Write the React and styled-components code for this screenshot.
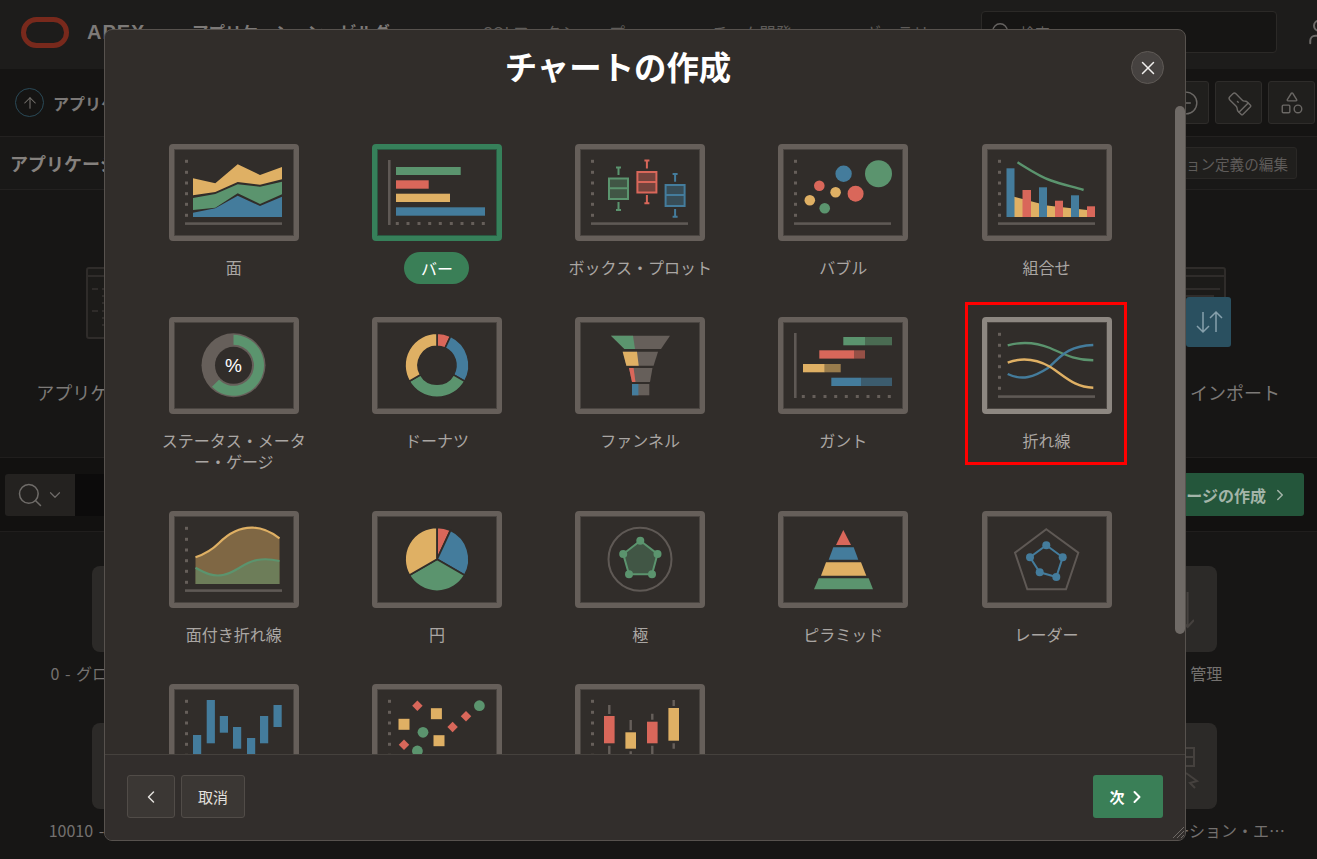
import React from "react";
import styled, { createGlobalStyle } from "styled-components";
import {
  ArrowUp,
  ChevronDown,
  ChevronLeft,
  ChevronRight,
  CircleMinus,
  Flashlight,
  Search,
  Shapes,
  User,
  X,
} from "lucide-react";

const BG = "#312d2a";
const GREY = "#665f5a";
const AXIS = "#5f5955";
const YEL = "#dfb064";
const BLU = "#447c9c";
const GRN = "#5b946e";
const RED = "#d9675a";
const FONT = `"Noto Sans CJK JP", "Noto Sans", sans-serif`;

const GlobalStyle = createGlobalStyle`
  html, body {
    margin: 0;
    height: 100%;
    background: #151413;
    font-family: ${FONT};
    overflow: hidden;
  }
`;

const Page = styled.div`
  position: relative;
  width: 1317px;
  height: 859px;
  overflow: hidden;
  background: #171615;
`;

const TopBar = styled.header`
  height: 69px;
  box-sizing: border-box;
  display: flex;
  align-items: center;
  padding: 0 0 5px 21px;
  background: #1d1c1b;
  color: #7d7a78;

  > svg {
    flex: none;
  }
`;

const Brand = styled.span`
  flex: none;
  margin-left: 18px;
  width: 105px;
  font: 700 20px "Liberation Sans", sans-serif;
  letter-spacing: 1px;
`;

const NavStrong = styled.span`
  flex: none;
  width: 291px;
  font-size: 16.5px;
  font-weight: 700;
  white-space: nowrap;
`;

const NavItem = styled.span`
  width: ${(p) => p.$w}px;
  flex: none;
  font-size: 16px;
  color: #5f5c5a;
  white-space: nowrap;
`;

const TopSearch = styled.div`
  width: 296px;
  height: 42px;
  box-sizing: border-box;
  flex: none;
  margin-left: 47px;
  display: flex;
  align-items: center;
  gap: 8px;
  padding-left: 8px;
  background: #161514;
  border: 1px solid #2b2927;
  border-radius: 4px;
  color: #666361;
  font-size: 15px;
`;

const UserSlot = styled.div`
  margin-left: 27px;
  flex: none;
  color: #6e6b69;
  display: flex;
`;

const Toolbar = styled.div`
  height: 67px;
  box-sizing: border-box;
  display: flex;
  align-items: center;
  padding: 0 2px 0 15px;
  background: #151413;
`;

const UpCircle = styled.div`
  width: 29px;
  height: 29px;
  box-sizing: border-box;
  border: 1px solid #2a4a58;
  border-radius: 50%;
  display: flex;
  align-items: center;
  justify-content: center;
  color: #77736f;
`;

const Crumb = styled.span`
  margin-left: 9px;
  font-size: 16px;
  font-weight: 700;
  color: #7b7876;
  white-space: nowrap;
`;

const ToolButtons = styled.div`
  margin-left: auto;
  display: flex;
  gap: 6px;
`;

const ToolButton = styled.div`
  width: 47px;
  height: 43px;
  box-sizing: border-box;
  display: flex;
  align-items: center;
  justify-content: center;
  background: #201f1d;
  border: 1px solid #2e2c2a;
  border-radius: 3px;
  color: #6b6865;
`;

const SectionHead = styled.div`
  height: 54px;
  box-sizing: border-box;
  display: flex;
  align-items: center;
  justify-content: space-between;
  padding: 0 20px 0 10px;
  background: #191817;
  border-top: 1px solid #232120;
  border-bottom: 1px solid #232120;
`;

const SectionTitle = styled.h2`
  margin: 0;
  font-size: 18px;
  font-weight: 700;
  color: #85817e;
`;

const EditButton = styled.div`
  height: 32px;
  box-sizing: border-box;
  padding: 0 8px;
  display: flex;
  align-items: center;
  font-size: 14.6px;
  color: #5f5c5a;
  background: #201f1d;
  border: 1px solid #2a2826;
  border-radius: 3px;
`;

const Hero = styled.section`
  height: 267px;
  box-sizing: border-box;
  display: flex;
  justify-content: space-between;
  padding: 77px 27px 0 26px;
  background: #171615;
`;

const HeroItem = styled.div`
  width: 200px;
  display: flex;
  flex-direction: column;
  align-items: center;
  font-size: 18px;
  color: #7d7a78;
  white-space: nowrap;
`;

const HeroIcon = styled.div`
  position: relative;
  height: 72px;
  margin-bottom: 40px;
  margin-right: ${(p) => p.$nudge || 0}px;
  color: #2f2c2a;
`;

const ImportBadge = styled.div`
  position: absolute;
  right: -5px;
  bottom: -8px;
  width: 45px;
  height: 50px;
  display: flex;
  align-items: center;
  justify-content: center;
  background: #2a5060;
  border-radius: 3px;
  color: #86a0ac;
`;

const SearchBar = styled.div`
  height: 75px;
  box-sizing: border-box;
  display: flex;
  align-items: center;
  padding: 0 13px 0 5px;
  background: #121110;
  border-top: 1px solid #201e1d;
  border-bottom: 1px solid #201e1d;
`;

const SearchToggle = styled.div`
  width: 70px;
  height: 42px;
  display: flex;
  align-items: center;
  justify-content: center;
  gap: 2px;
  background: #242220;
  border-radius: 3px 0 0 3px;
  color: #6f6c69;
`;

const SearchInput = styled.div`
  flex: 1;
  height: 42px;
  background: #0c0b0b;
`;

const CreateButton = styled.div`
  height: 43px;
  margin-left: 12px;
  padding: 0 15px 0 12px;
  display: flex;
  align-items: center;
  gap: 5px;
  background: #24563b;
  border-radius: 3px;
  font-size: 16px;
  font-weight: 700;
  color: #a3b5a9;
`;

const PageGrid = styled.div`
  display: grid;
  grid-template-columns: repeat(5, 234px);
  column-gap: 25.8px;
  padding: 34px 0 0 18px;
`;

const PageCard = styled.div`
  height: 157px;
  display: flex;
  flex-direction: column;
  align-items: center;
  min-width: 0;
`;

const PageTile = styled.div`
  width: 86px;
  height: 86px;
  flex: none;
  display: flex;
  align-items: center;
  justify-content: center;
  background: #2c2a28;
  border-radius: 8px;
  color: #45413e;
`;

const PageLabel = styled.div`
  margin-top: 10px;
  max-width: 234px;
  font-size: 16px;
  line-height: 22px;
  word-spacing: 2px;
  color: #74716f;
  white-space: nowrap;
  overflow: hidden;
  text-overflow: ellipsis;
  text-align: center;
`;

const Modal = styled.div`
  position: absolute;
  left: 104px;
  top: 29px;
  width: 1082px;
  height: 812px;
  box-sizing: border-box;
  display: flex;
  flex-direction: column;
  background: ${BG};
  border: 1px solid #57524e;
  border-radius: 8px;
  overflow: hidden;
`;

const ModalHead = styled.div`
  height: 76px;
  flex: none;
  display: flex;
  align-items: flex-start;
  padding-right: 21px;
`;

const ModalTitle = styled.h1`
  flex: 1;
  margin: 14px 0 0;
  font-size: 32.4px;
  line-height: 44px;
  font-weight: 700;
  text-align: center;
  color: #fff;
`;

const CloseButton = styled.button`
  width: 33px;
  height: 33px;
  margin-top: 21px;
  padding: 0;
  display: flex;
  align-items: center;
  justify-content: center;
  background: #464240;
  border: 1px solid #5f5a56;
  border-radius: 50%;
  color: #f0eeec;
`;

const ModalBody = styled.div`
  flex: 1;
  min-height: 0;
  overflow: hidden;
  padding: 38px 27px 44px 27.2px;
`;

const ScrollThumb = styled.div`
  position: absolute;
  right: 0;
  top: 76px;
  width: 10px;
  height: 528px;
  border-radius: 5px;
  background: #6f6a66;
`;

const ChartGrid = styled.div`
  display: grid;
  grid-template-columns: repeat(5, 203.2px);
`;

const Tile = styled.div`
  position: relative;
  display: flex;
  flex-direction: column;
  align-items: center;
  padding-bottom: 34px;
`;

const ChartFrame = styled.div`
  width: 130px;
  height: 97px;
  box-sizing: border-box;
  flex: none;
  border: 5px solid ${(p) => (p.$selected ? "#36805a" : p.$focused ? "#8d8781" : GREY)};
  border-radius: 4px;
  box-shadow: inset 0 0 0 1px ${(p) => (p.$selected ? "#2a5a42" : "#4a4541")};

  svg {
    display: block;
    width: 120px;
    height: 87px;
  }
`;

const TileLabel = styled.div`
  width: 155px;
  margin-top: 10px;
  font-size: 16px;
  line-height: 21px;
  padding: 5.5px 0;
  text-align: center;
  color: #aaa6a3;
`;

const SelectedLabel = styled.div`
  margin: 11px 0 -1px;
  padding: 5.5px 16.5px;
  font-size: 16px;
  line-height: 21px;
  border-radius: 16px;
  background: #3a7f57;
  color: #fff;
`;

const Highlight = styled.div`
  position: absolute;
  left: 20px;
  top: -15px;
  width: 162px;
  height: 163px;
  box-sizing: border-box;
  border: 3px solid #f00;
  pointer-events: none;
`;

const ModalFoot = styled.div`
  height: 86px;
  flex: none;
  box-sizing: border-box;
  display: flex;
  align-items: flex-start;
  gap: 6px;
  padding: 20px 22px 0 22px;
  border-top: 1px solid #45413d;
  background: #322e2c;
`;

const FootButton = styled.button`
  height: 43px;
  padding: 0 ${(p) => (p.$icon ? "13px" : "16px")};
  display: flex;
  align-items: center;
  background: #3b3734;
  border: 1px solid #514c48;
  border-radius: 3px;
  font-family: ${FONT};
  font-size: 15px;
  color: #e3e0dd;
`;

const NextButton = styled.button`
  height: 43px;
  width: 70px;
  margin-left: auto;
  padding: 0;
  display: flex;
  align-items: center;
  justify-content: center;
  gap: 2px;
  background: #3a7f57;
  border: none;
  border-radius: 3px;
  font-family: ${FONT};
  font-size: 15px;
  font-weight: 700;
  color: #fff;
`;

const ResizeGrip = styled.svg`
  position: absolute;
  right: 1px;
  bottom: 2px;
`;

const pt = (cx, cy, r, deg) => {
  const a = (deg * Math.PI) / 180;
  return [cx + r * Math.sin(a), cy - r * Math.cos(a)];
};

const slice = (cx, cy, r0, r1, a0, a1) => {
  const large = a1 - a0 > 180 ? 1 : 0;
  const [x0, y0] = pt(cx, cy, r1, a0);
  const [x1, y1] = pt(cx, cy, r1, a1);
  if (!r0) return `M${cx} ${cy}L${x0} ${y0}A${r1} ${r1} 0 ${large} 1 ${x1} ${y1}Z`;
  const [x2, y2] = pt(cx, cy, r0, a1);
  const [x3, y3] = pt(cx, cy, r0, a0);
  return `M${x0} ${y0}A${r1} ${r1} 0 ${large} 1 ${x1} ${y1}L${x2} ${y2}A${r0} ${r0} 0 ${large} 0 ${x3} ${y3}Z`;
};

const Canvas = ({ children }) => <svg viewBox="5 5 120 87">{children}</svg>;

const YDots = () =>
  [17.3, 28.3, 39, 49.7, 60.3, 71.3].map((y) => (
    <rect key={y} x="16" y={y - 1.5} width="3" height="3" fill={GREY} />
  ));

const XAxis = () => <rect x="16" y="78.3" width="97" height="2.6" fill={AXIS} />;

const XDots = () =>
  [25.3, 36, 47, 57.7, 68.3, 79.3, 90, 100.7, 111.3].map((x) => (
    <rect key={x} x={x - 1.5} y="78" width="3" height="3" fill={GREY} />
  ));

const YAxis = () => <rect x="16" y="16" width="2.6" height="65" fill={AXIS} />;

const AreaChart = () => (
  <Canvas>
    <YDots />
    <XAxis />
    <path d="M24 68.7L46.3 64.3L68.7 51.7L91 62L113 52.7V73H24Z" fill={BLU} />
    <path d="M24 54L46.3 50L68.7 40.3L91 42.7L113 37.7V50.3L91 60L68.7 49.3L46.3 63.7L24 66Z" fill={GRN} />
    <path d="M24 34.3L46.3 39.3L68.7 20.3L91 31L113 23V35.3L91 40.7L68.7 38L46.3 48L24 51.3Z" fill={YEL} />
  </Canvas>
);

const BarChart = () => (
  <Canvas>
    <YAxis />
    <XDots />
    <rect x="24" y="23" width="64.7" height="8" fill={GRN} />
    <rect x="24" y="36.3" width="32.7" height="8.4" fill={RED} />
    <rect x="24" y="49.7" width="54" height="8.3" fill={YEL} />
    <rect x="24" y="63.3" width="89" height="8.4" fill={BLU} />
  </Canvas>
);

const Box = ({ x, top, mid, bottom, t0, t1, b0, b1, color }) => {
  const cx = x + 9.5;
  return (
    <g stroke={color} fill="none">
      <rect x={x} y={top} width="19" height={bottom - top} strokeWidth="2" fill={color} fillOpacity="0.4" />
      <path d={`M${x} ${mid}H${x + 19}`} strokeWidth="2" />
      <path d={`M${cx} ${t0}V${t1}M${cx - 2.5} ${t0}H${cx + 2.5}M${cx} ${b0}V${b1}M${cx - 2.5} ${b1}H${cx + 2.5}`} strokeWidth="2" />
    </g>
  );
};

const BoxPlotChart = () => (
  <Canvas>
    <YDots />
    <XAxis />
    <Box x={34} top={34.5} mid={44.3} bottom={55} t0={23.5} t1={31} b0={58} b1={66} color={GRN} />
    <Box x={62.4} top={28} mid={38} bottom={48.5} t0={16.5} t1={24.5} b0={51} b1={59.3} color={RED} />
    <Box x={90.6} top={41} mid={51} bottom={62} t0={30} t1={37.7} b0={65} b1={72.7} color={BLU} />
  </Canvas>
);

const BubbleChart = () => (
  <Canvas>
    <YDots />
    <XAxis />
    <circle cx="65.6" cy="29.7" r="8.2" fill={BLU} />
    <circle cx="100.5" cy="29.7" r="13.5" fill={GRN} />
    <circle cx="41.3" cy="41.7" r="5.3" fill={RED} />
    <circle cx="57.6" cy="48.3" r="5.3" fill={YEL} />
    <circle cx="77.6" cy="49.7" r="8" fill={RED} />
    <circle cx="31.8" cy="56.3" r="5.3" fill={YEL} />
    <circle cx="46.7" cy="64.3" r="5.3" fill={GRN} />
  </Canvas>
);

const ComboChart = () => (
  <Canvas>
    <YDots />
    <XAxis />
    <path d="M32 52.7L65 61.5L105 66V73H32Z" fill={YEL} />
    <rect x="24.5" y="24.3" width="8" height="48.7" fill={BLU} />
    <rect x="40.5" y="46" width="8.5" height="27" fill={RED} />
    <rect x="57" y="43.3" width="8" height="29.7" fill={BLU} />
    <rect x="73" y="56.7" width="8" height="16.3" fill={RED} />
    <rect x="89" y="51.3" width="8" height="21.7" fill={BLU} />
    <rect x="105" y="62.3" width="8" height="10.7" fill={RED} />
    <path d="M35.5 18.3C48 26 58 33 69 36.5C80 40.5 90 42.5 101.6 46" stroke={GRN} strokeWidth="2.4" fill="none" />
  </Canvas>
);

const GaugeChart = () => (
  <Canvas>
    <circle cx="64.5" cy="48.3" r="32" fill={GREY} />
    <path d={slice(64.5, 48.3, 20.5, 30.5, 0, 225)} fill={GRN} />
    <circle cx="64.5" cy="48.3" r="18.5" fill={BG} />
    <text x="64.5" y="55" textAnchor="middle" fontFamily="'Liberation Sans', sans-serif" fontSize="19" fill="#fff">%</text>
  </Canvas>
);

const DonutChart = () => (
  <Canvas>
    <path d={slice(65, 48.3, 19, 32, 0, 25)} fill={RED} stroke={BG} strokeWidth="1.6" />
    <path d={slice(65, 48.3, 19, 32, 25, 120)} fill={BLU} stroke={BG} strokeWidth="1.6" />
    <path d={slice(65, 48.3, 19, 32, 120, 240)} fill={GRN} stroke={BG} strokeWidth="1.6" />
    <path d={slice(65, 48.3, 19, 32, 240, 360)} fill={YEL} stroke={BG} strokeWidth="1.6" />
  </Canvas>
);

const FunnelChart = () => (
  <Canvas>
    <path d="M36 18.7H95L86 32H49.5Z" fill={GREY} />
    <path d="M36 18.7H58L60 32H49.5Z" fill={GRN} />
    <path d="M47.7 34.7H83L78.6 48.7H51.4Z" fill={GREY} />
    <path d="M47.7 34.7H62L63.7 48.7H51.4Z" fill={YEL} />
    <path d="M54 51H77.5L75 65H57Z" fill={GREY} />
    <path d="M54 51H58.6L60.5 65H57Z" fill={RED} />
    <rect x="57" y="67" width="17.3" height="11.3" fill={GREY} />
    <rect x="57" y="67" width="6.4" height="11.3" fill={BLU} />
  </Canvas>
);

const GanttBar = ({ x, y, split, end, color }) => (
  <g>
    <rect x={x} y={y} width={split - x} height="8.3" fill={color} />
    <rect x={split} y={y} width={end - split} height="8.3" fill={color} fillOpacity="0.6" />
  </g>
);

const GanttChart = () => (
  <Canvas>
    <YAxis />
    <XDots />
    <GanttBar x={65.3} y={20} split={87} end={114} color={GRN} />
    <GanttBar x={41.3} y={33.3} split={76.3} end={87} color={RED} />
    <GanttBar x={25} y={47} split={46.7} end={62.7} color={YEL} />
    <GanttBar x={53.3} y={60.7} split={83} end={114} color={BLU} />
  </Canvas>
);

const LineChart = () => (
  <Canvas>
    <YDots />
    <XAxis />
    <g fill="none" strokeWidth="2.4">
      <path d="M25.7 28.3C38 25 52 24.5 68 31C82 37 92 43 111.3 43.3" stroke={GRN} />
      <path d="M25.7 57C40 64 52 60 66 51C78 41 84 29 111.3 28" stroke={BLU} />
      <path d="M25.7 45.7C38 41 52 41 68 49.7C84 60 92 70 111.3 70.7" stroke={YEL} />
    </g>
  </Canvas>
);

const AreaLineChart = () => (
  <Canvas>
    <YDots />
    <XAxis />
    <path d="M26.5 46.3C36 43 42 40 50 32C60 22 72 16 84.6 16.7C94 17 102 21 110.5 27.3V73H26.5Z" fill={YEL} fillOpacity="0.45" />
    <path d="M26.5 56.7C36 62 44 66 54 64C66 62 74 52 88 49C96 47.5 104 48.5 110.5 50V73H26.5Z" fill={GRN} fillOpacity="0.5" />
    <path d="M26.5 46.3C36 43 42 40 50 32C60 22 72 16 84.6 16.7C94 17 102 21 110.5 27.3" stroke={YEL} strokeWidth="2.2" fill="none" />
    <path d="M26.5 56.7C36 62 44 66 54 64C66 62 74 52 88 49C96 47.5 104 48.5 110.5 50" stroke={GRN} strokeWidth="2.2" fill="none" />
  </Canvas>
);

const PieChart = () => (
  <Canvas>
    <path d={slice(65, 48.3, 0, 32, 0, 25)} fill={RED} stroke={BG} strokeWidth="1.8" />
    <path d={slice(65, 48.3, 0, 32, 25, 120)} fill={BLU} stroke={BG} strokeWidth="1.8" />
    <path d={slice(65, 48.3, 0, 32, 120, 240)} fill={GRN} stroke={BG} strokeWidth="1.8" />
    <path d={slice(65, 48.3, 0, 32, 240, 360)} fill={YEL} stroke={BG} strokeWidth="1.8" />
  </Canvas>
);

const Nodes = ({ points, color, fillOpacity }) => (
  <g>
    <polygon
      points={points.map((p) => p.join(",")).join(" ")}
      fill={fillOpacity ? color : "none"}
      fillOpacity={fillOpacity}
      stroke={color}
      strokeWidth="2"
    />
    {points.map(([x, y]) => (
      <circle key={x} cx={x} cy={y} r="4" fill={color} />
    ))}
  </g>
);

const PolarChart = () => (
  <Canvas>
    <circle cx="65" cy="48.3" r="31.5" fill="none" stroke={AXIS} strokeWidth="2" />
    <Nodes color={GRN} fillOpacity={0.4} points={[[65.3, 29.7], [82.5, 43], [77, 63.3], [54, 63.3], [48.2, 43]]} />
  </Canvas>
);

const PyramidChart = () => (
  <Canvas>
    <path d="M65.3 19L73 34H58Z" fill={RED} />
    <path d="M55.3 36.3H75.7L80.3 48.7H50.7Z" fill={BLU} />
    <path d="M48 51.3H83L88.3 64.7H43Z" fill={YEL} />
    <path d="M40.7 67.3H90.7L95 78.3H36Z" fill={GRN} />
  </Canvas>
);

const RadarChart = () => (
  <Canvas>
    <polygon points="64.3,18.3 96.3,41.7 84,78.3 45.3,78.3 33,41.7" fill="none" stroke={AXIS} strokeWidth="2" />
    <Nodes color={BLU} points={[[64.3, 34.3], [80.7, 46.3], [74.3, 66], [57.7, 61.3], [48, 46.3]]} />
  </Canvas>
);

const RangeChart = () => (
  <Canvas>
    <YDots />
    <XAxis />
    {[[24, 51, 22], [37.7, 16, 43.3], [50.8, 32, 16.7], [64, 43, 21.7], [78, 54, 19], [91, 32, 27.3], [104.5, 21, 22]].map(([x, y, h]) => (
      <rect key={x} x={x} y={y} width="8.2" height={h} fill={BLU} />
    ))}
  </Canvas>
);

const ScatterChart = () => (
  <Canvas>
    <YDots />
    <XAxis />
    {[[45.4, 21.7], [94, 32.3], [80.6, 43], [32, 60.7]].map(([x, y]) => (
      <rect key={x} x={x - 3.7} y={y - 3.7} width="7.4" height="7.4" fill={RED} transform={`rotate(45 ${x} ${y})`} />
    ))}
    {[[64.4, 29.7], [32, 40.3], [67, 56.7]].map(([x, y]) => (
      <rect key={x} x={x - 5.5} y={y - 5.5} width="11" height="11" fill={YEL} />
    ))}
    {[[107.4, 21.7], [51, 48.3], [45.4, 67]].map(([x, y]) => (
      <circle key={x} cx={x} cy={y} r="5.4" fill={GRN} />
    ))}
  </Canvas>
);

const Candle = ({ x, top, bottom, t0, b1, color }) => (
  <g>
    <path d={`M${x + 5.3} ${t0}V${top - 2}M${x + 5.3} ${bottom + 2.5}V${b1}`} stroke={GREY} strokeWidth="2.4" />
    <rect x={x} y={top} width="10.6" height={bottom - top} fill={color} />
  </g>
);

const CandleChart = () => (
  <Canvas>
    <YDots />
    <XAxis />
    <Candle x={29} top={32} bottom={59.3} t0={21} b1={72} color={RED} />
    <Candle x={50.4} top={48.3} bottom={64.7} t0={36} b1={72} color={YEL} />
    <Candle x={72} top={37.7} bottom={59.3} t0={29.7} b1={72} color={RED} />
    <Candle x={93.4} top={24} bottom={56.7} t0={16} b1={64.7} color={YEL} />
  </Canvas>
);

const CHARTS = [
  { label: "面", Chart: AreaChart },
  { label: "バー", Chart: BarChart, selected: true },
  { label: "ボックス・プロット", Chart: BoxPlotChart },
  { label: "バブル", Chart: BubbleChart },
  { label: "組合せ", Chart: ComboChart },
  { label: "ステータス・メーター・ゲージ", Chart: GaugeChart },
  { label: "ドーナツ", Chart: DonutChart },
  { label: "ファンネル", Chart: FunnelChart },
  { label: "ガント", Chart: GanttChart },
  { label: "折れ線", Chart: LineChart, focused: true },
  { label: "面付き折れ線", Chart: AreaLineChart },
  { label: "円", Chart: PieChart },
  { label: "極", Chart: PolarChart },
  { label: "ピラミッド", Chart: PyramidChart },
  { label: "レーダー", Chart: RadarChart },
  { label: "レンジ", Chart: RangeChart },
  { label: "散布図", Chart: ScatterChart },
  { label: "株価", Chart: CandleChart },
];

const DocIcon = () => (
  <svg width="72" height="72" viewBox="0 0 72 72" fill="#1c1b19" stroke="currentColor" strokeWidth="2">
    <rect x="1" y="1" width="70" height="70" rx="2" />
    <path d="M1 9H71M6 22H12M16 22H66M16 29H60M16 36H62M6 44H12M16 44H66M16 51H60M16 58H62" />
  </svg>
);

const ImportArrows = () => (
  <svg width="28" height="24" viewBox="0 0 28 24" fill="none" stroke="currentColor" strokeWidth="1.5">
    <path d="M8 2V22M2 16L8 22L14 16M21 22V2M15 8L21 2L27 8" />
  </svg>
);

const ArrowTileIcon = () => (
  <svg width="40" height="40" viewBox="0 0 40 40" fill="none" stroke="currentColor" strokeWidth="2">
    <path d="M33.6 3V38M27 31L33.6 38L40 31" />
  </svg>
);

const CursorTileIcon = () => (
  <svg width="50" height="50" viewBox="0 0 50 50" fill="none" stroke="currentColor" strokeWidth="2">
    <path d="M5 7H45V25H5ZM25 7V25M5 16H45M37 32L48 40L41 42L46 47" />
  </svg>
);

const PAGE_CARDS = [
  { label: "0 - グローバル・ページ" },
  { label: "1 - ホーム" },
  { label: "2 - ダッシュボード" },
  { label: "3 - レポート" },
  { label: "テーマ・管理", icon: <ArrowTileIcon /> },
  { label: "10010 - ホーム画面設定" },
  { label: "10011 - 設定" },
  { label: "10012 - 概要" },
  { label: "10013 - 詳細" },
  { label: "9999 - アプリケーション・エラー処理の構成", icon: <CursorTileIcon /> },
];

export default function App() {
  return (
    <Page>
      <GlobalStyle />
      <TopBar>
        <svg width="48" height="31" viewBox="0 0 48 31" fill="none">
          <rect x="2.5" y="2.5" width="43" height="26" rx="13" stroke="#78291c" strokeWidth="5" />
        </svg>
        <Brand>APEX</Brand>
        <NavStrong>アプリケーション・ビルダー</NavStrong>
        <NavItem $w={229}>SQLワークショップ</NavItem>
        <NavItem $w={153}>チーム開発</NavItem>
        <NavItem $w={69}>ギャラリー</NavItem>
        <TopSearch>
          <Search size={22} strokeWidth={1.5} />
          <span>検索</span>
        </TopSearch>
        <UserSlot>
          <User size={30} strokeWidth={1.6} />
        </UserSlot>
      </TopBar>

      <Toolbar>
        <UpCircle>
          <ArrowUp size={18} strokeWidth={1.4} />
        </UpCircle>
        <Crumb>アプリケーション</Crumb>
        <ToolButtons>
          <ToolButton>
            <CircleMinus size={26} strokeWidth={1.3} />
          </ToolButton>
          <ToolButton>
            <Flashlight size={26} strokeWidth={1.3} style={{ transform: "rotate(135deg)" }} />
          </ToolButton>
          <ToolButton>
            <Shapes size={26} strokeWidth={1.3} />
          </ToolButton>
        </ToolButtons>
      </Toolbar>

      <SectionHead>
        <SectionTitle>アプリケーション</SectionTitle>
        <EditButton>アプリケーション定義の編集</EditButton>
      </SectionHead>

      <Hero>
        <HeroItem>
          <HeroIcon $nudge={8}>
            <DocIcon />
          </HeroIcon>
          アプリケーション実行
        </HeroItem>
        <HeroItem>
          <HeroIcon>
            <DocIcon />
            <ImportBadge>
              <ImportArrows />
            </ImportBadge>
          </HeroIcon>
          ファイル・インポート
        </HeroItem>
      </Hero>

      <SearchBar>
        <SearchToggle>
          <Search size={28} strokeWidth={1.3} />
          <ChevronDown size={18} strokeWidth={1.6} />
        </SearchToggle>
        <SearchInput />
        <CreateButton>
          ページの作成
          <ChevronRight size={18} />
        </CreateButton>
      </SearchBar>

      <PageGrid>
        {PAGE_CARDS.map((card) => (
          <PageCard key={card.label}>
            <PageTile>{card.icon}</PageTile>
            <PageLabel>{card.label}</PageLabel>
          </PageCard>
        ))}
      </PageGrid>

      <Modal>
        <ModalHead>
          <ModalTitle>チャートの作成</ModalTitle>
          <CloseButton aria-label="閉じる">
            <X size={22} strokeWidth={1.6} />
          </CloseButton>
        </ModalHead>

        <ModalBody>
          <ChartGrid>
            {CHARTS.map(({ label, Chart, selected, focused }) => (
              <Tile key={label}>
                <ChartFrame $selected={selected} $focused={focused}>
                  <Chart />
                </ChartFrame>
                {selected ? <SelectedLabel>{label}</SelectedLabel> : <TileLabel>{label}</TileLabel>}
                {focused && <Highlight />}
              </Tile>
            ))}
          </ChartGrid>
        </ModalBody>

        <ScrollThumb />

        <ModalFoot>
          <FootButton $icon aria-label="戻る">
            <ChevronLeft size={20} strokeWidth={1.8} />
          </FootButton>
          <FootButton>取消</FootButton>
          <NextButton>
            次
            <ChevronRight size={20} strokeWidth={2.4} />
          </NextButton>
        </ModalFoot>

        <ResizeGrip width="11" height="11" viewBox="0 0 11 11" stroke="#6f6a66" strokeWidth="1">
          <path d="M0 11L11 0M4 11L11 4M8 11L11 8" />
        </ResizeGrip>
      </Modal>
    </Page>
  );
}
